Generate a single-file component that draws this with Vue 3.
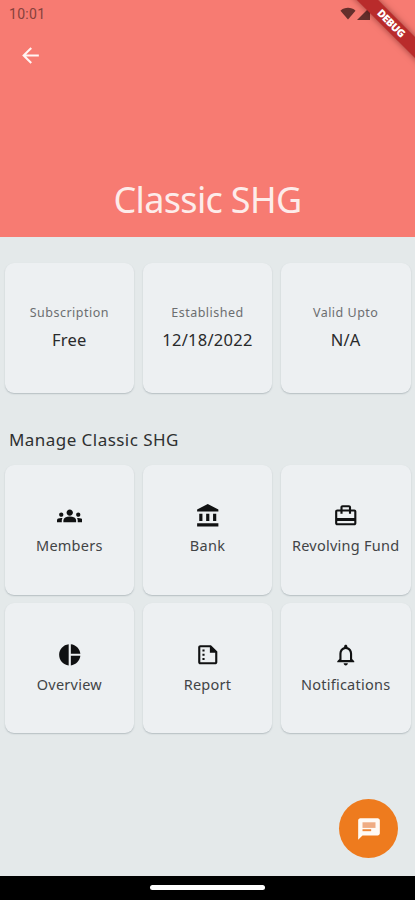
<script setup>
const details = [
  { label: 'Subscription', value: 'Free' },
  { label: 'Established', value: '12/18/2022' },
  { label: 'Valid Upto', value: 'N/A' },
]

const actions = [
  {
    label: 'Members',
    path: 'M4 13c1.1 0 2-.9 2-2s-.9-2-2-2-2 .9-2 2 .9 2 2 2zm1.13 1.1C4.76 14.04 4.39 14 4 14c-.99 0-1.93.21-2.78.58C.48 14.9 0 15.62 0 16.43V18h4.5v-1.61c0-.83.23-1.61.63-2.29zM20 13c1.1 0 2-.9 2-2s-.9-2-2-2-2 .9-2 2 .9 2 2 2zm4 3.43c0-.81-.48-1.53-1.22-1.85A6.95 6.95 0 0 0 20 14c-.39 0-.76.04-1.13.1.4.68.63 1.46.63 2.29V18H24v-1.57zM16.24 13.65C15.07 13.13 13.63 12.75 12 12.75s-3.07.39-4.24.9A2.99 2.99 0 0 0 6 16.39V18h12v-1.61c0-1.18-.68-2.26-1.76-2.74zM12 6c-1.66 0-3 1.34-3 3s1.34 3 3 3 3-1.34 3-3-1.34-3-3-3z',
  },
  {
    label: 'Bank',
    path: 'M4 10v7h3v-7H4zm6.5 0v7h3v-7h-3zM2 22h20v-3H2v3zm15-12v7h3v-7h-3zM12 1L2 6v2h20V6L12 1z',
  },
  {
    label: 'Revolving Fund',
    path: 'M20 6h-3V4c0-1.11-.89-2-2-2H9c-1.11 0-2 .89-2 2v2H4c-1.11 0-2 .89-2 2v11c0 1.11.89 2 2 2h16c1.11 0 2-.89 2-2V8c0-1.11-.89-2-2-2zM9 4h6v2H9V4zm11 15H4v-2h16v2zm0-5H4V8h3v2h2V8h6v2h2V8h3v6z',
  },
  {
    label: 'Overview',
    path: 'M11 2v20c-5.07-.5-9-4.79-9-10s3.93-9.5 9-10zm2.03 0v8.99H22c-.47-4.74-4.24-8.52-8.97-8.99zm0 11.01V22c4.74-.47 8.5-4.25 8.97-8.99h-8.97z',
  },
  {
    label: 'Report',
    path: 'M15 3H5c-1.1 0-1.99.9-1.99 2L3 19c0 1.1.89 2 1.99 2H19c1.1 0 2-.9 2-2V9l-6-6zM5 19V5h9v5h5v9H5zM7 7h2v2H7zm0 4h2v2H7zm0 4h2v2H7z',
  },
  {
    label: 'Notifications',
    path: 'M12 22c1.1 0 2-.9 2-2h-4c0 1.1.9 2 2 2zm6-6v-5c0-3.07-1.63-5.64-4.5-6.32V4c0-.83-.67-1.5-1.5-1.5s-1.5.67-1.5 1.5v.68C7.64 5.36 6 7.92 6 11v5l-2 2v1h16v-1l-2-2zm-2 1H8v-6c0-2.48 1.51-4.5 4-4.5s4 2.02 4 4.5v6z',
  },
]
</script>

<template>
  <div class="screen">
    <header class="header">
      <div class="status">
        <span class="time">10:01</span>
        <div class="signals">
          <svg width="16" height="13" viewBox="0 0 17 13"><path d="M8.500 13L.5 3.500C5 -.5 12 -.5 16.500 3.500z" /></svg>
          <svg width="13" height="13" viewBox="0 0 13 13"><path d="M0 13L13 0v13z" /></svg>
        </div>
      </div>
      <button class="back" aria-label="Back">
        <svg width="25" height="25" viewBox="0 0 24 24"><path d="M20 11H7.830l5.590-5.590L12 4l-8 8 8 8 1.410-1.410L7.830 13H20v-2z" /></svg>
      </button>
      <h1 class="title">Classic SHG</h1>
      <div class="debug"><span>DEBUG</span></div>
    </header>

    <main class="content">
      <section class="grid">
        <article v-for="d in details" :key="d.label" class="card">
          <span class="label">{{ d.label }}</span>
          <span class="value">{{ d.value }}</span>
        </article>
      </section>
      <h2 class="heading">Manage Classic SHG</h2>
      <section class="grid">
        <article v-for="a in actions" :key="a.label" class="card action">
          <svg class="icon" viewBox="0 0 24 24"><path :d="a.path" /></svg>
          <span class="name">{{ a.label }}</span>
        </article>
      </section>
    </main>

    <button class="fab" aria-label="Chat">
      <svg width="26" height="26" viewBox="0 0 24 24">
        <path d="M20 2H4c-1.100 0-1.990.9-1.990 2L2 22l4-4h14c1.100 0 2-.9 2-2V4c0-1.100-.9-2-2-2z" />
        <path class="lines" d="M6 5.800h12v5.200H6z" />
        <path class="line" d="M6 12.200h8v1.800H6z" />
      </svg>
    </button>
    <nav class="navbar"><span class="handle"></span></nav>
  </div>
</template>

<style>
body {
  margin: 0;
}
</style>

<style scoped>
.screen {
  position: relative;
  display: flex;
  flex-direction: column;
  width: 415px;
  height: 900px;
  overflow: hidden;
  background: #e4e9ea;
  font-family: 'Noto Sans', sans-serif;
}
button {
  border: 0;
  padding: 0;
  background: none;
}
svg {
  display: block;
}
.header {
  position: relative;
  display: flex;
  flex-direction: column;
  box-sizing: border-box;
  height: 237px;
  flex: none;
  overflow: hidden;
  background: #f77b72;
}
.status {
  display: flex;
  justify-content: space-between;
  padding: 6px 45px 0 9px;
  height: 22px;
  box-sizing: border-box;
}
.time {
  font: 14px/16px Roboto, sans-serif;
  letter-spacing: 0.300px;
  color: #86413c;
}
.signals {
  display: flex;
  gap: 1px;
  padding-top: 0.500px;
  fill: #652f2c;
}
.back {
  width: 25px;
  height: 25px;
  margin: 21px 0 0 17.500px;
  fill: #fff5f3;
}
.title {
  margin: auto 0 12.500px;
  text-align: center;
  font-weight: 400;
  font-size: 36px;
  line-height: 50px;
  letter-spacing: -0.650px;
  color: #fdecea;
}
.debug {
  position: absolute;
  top: 16px;
  left: 341px;
  width: 100px;
  height: 15px;
  display: flex;
  align-items: center;
  justify-content: center;
  transform: rotate(45deg);
  background: #b92b2b;
  box-shadow: 0 0 6px rgba(60, 0, 0, 0.5);
  color: #fff;
  font: 900 10.500px/15px 'Noto Sans', sans-serif;
  letter-spacing: -0.400px;
}
.content {
  flex: 1;
  padding: 25.500px 4.500px 0 4.500px;
}
.grid {
  display: grid;
  grid-template-columns: repeat(3, 1fr);
  gap: 8.500px;
}
.card {
  display: flex;
  flex-direction: column;
  align-items: center;
  box-sizing: border-box;
  height: 130px;
  padding-top: 41px;
  border-radius: 9px;
  background: #edf0f2;
  box-shadow: 0 1px 1.500px rgba(60, 80, 90, 0.28);
  white-space: nowrap;
}
.label {
  font-size: 12.500px;
  line-height: 18px;
  letter-spacing: 0.500px;
  color: #6c6e70;
}
.value {
  margin-top: 6px;
  font-size: 16.500px;
  line-height: 24px;
  letter-spacing: 0.250px;
  color: #292a2b;
}
.heading {
  margin: 34px 0 12px 4.500px;
  font-weight: 400;
  font-size: 17px;
  line-height: 26px;
  letter-spacing: 0.450px;
  color: #2e3031;
}
.action {
  padding-top: 38.500px;
}
.icon {
  width: 25.500px;
  height: 25.500px;
  fill: #101112;
}
.name {
  margin-top: 6.500px;
  font-size: 14.500px;
  line-height: 20px;
  letter-spacing: 0.250px;
  color: #424446;
}
.fab {
  position: absolute;
  right: 17px;
  bottom: 42px;
  display: flex;
  align-items: center;
  justify-content: center;
  width: 59px;
  height: 59px;
  border-radius: 50%;
  background: #ee7b1e;
  fill: #fffaf5;
}
.lines {
  fill: #efac83;
}
.line {
  fill: #ee8838;
}
.navbar {
  display: flex;
  justify-content: center;
  align-items: center;
  flex: none;
  height: 24.500px;
  background: #000;
}
.handle {
  width: 115px;
  height: 5px;
  border-radius: 3px;
  background: #fff;
}
</style>
